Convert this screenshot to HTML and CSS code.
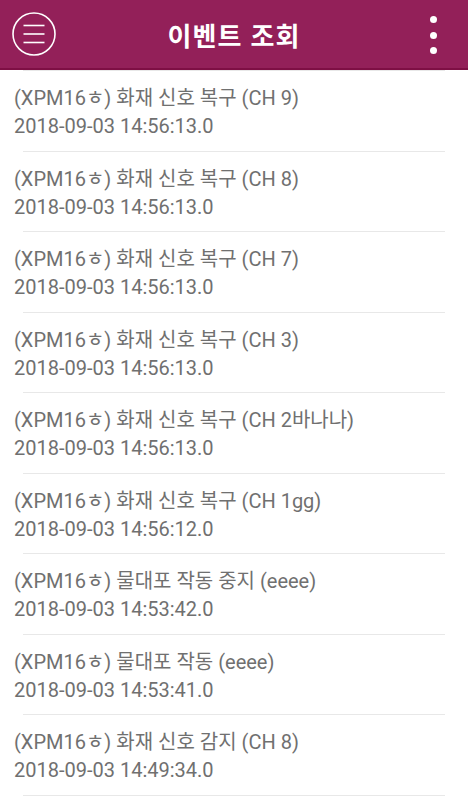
FILE: index.html
```html
<!DOCTYPE html>
<html lang="ko">
<head>
    <meta charset="UTF-8">
    <meta name="viewport" content="width=device-width, initial-scale=1.0">
    <title>이벤트 조회</title>
    <link rel="stylesheet" href="styles.css">
</head>

<body>
    <header class="navbar">
        <button class="menu-btn" aria-label="메뉴">
            <svg width="46" height="46" viewBox="0 0 46 46">
                <circle cx="23" cy="23" r="21" fill="none" stroke="#fff" stroke-width="1.6"/>
                <line x1="12.5" y1="14.5" x2="33.5" y2="14.5" stroke="#fff" stroke-width="1.6"/>
                <line x1="12.5" y1="23" x2="33.5" y2="23" stroke="#fff" stroke-width="1.6"/>
                <line x1="12.5" y1="31.5" x2="33.5" y2="31.5" stroke="#fff" stroke-width="1.6"/>
            </svg>
        </button>
        <h1>이벤트 조회</h1>
        <button class="more-btn" aria-label="더보기">
            <span></span><span></span><span></span>
        </button>
    </header>

    <ul class="event-list">
        <li class="event">
            <p>(XPM16ㅎ) 화재 신호 복구 (CH 9)</p>
            <p>2018-09-03 14:56:13.0</p>
        </li>
        <li class="event">
            <p>(XPM16ㅎ) 화재 신호 복구 (CH 8)</p>
            <p>2018-09-03 14:56:13.0</p>
        </li>
        <li class="event">
            <p>(XPM16ㅎ) 화재 신호 복구 (CH 7)</p>
            <p>2018-09-03 14:56:13.0</p>
        </li>
        <li class="event">
            <p>(XPM16ㅎ) 화재 신호 복구 (CH 3)</p>
            <p>2018-09-03 14:56:13.0</p>
        </li>
        <li class="event">
            <p>(XPM16ㅎ) 화재 신호 복구 (CH 2바나나)</p>
            <p>2018-09-03 14:56:13.0</p>
        </li>
        <li class="event">
            <p>(XPM16ㅎ) 화재 신호 복구 (CH 1gg)</p>
            <p>2018-09-03 14:56:12.0</p>
        </li>
        <li class="event">
            <p>(XPM16ㅎ) 물대포 작동 중지 (eeee)</p>
            <p>2018-09-03 14:53:42.0</p>
        </li>
        <li class="event">
            <p>(XPM16ㅎ) 물대포 작동 (eeee)</p>
            <p>2018-09-03 14:53:41.0</p>
        </li>
        <li class="event">
            <p>(XPM16ㅎ) 화재 신호 감지 (CH 8)</p>
            <p>2018-09-03 14:49:34.0</p>
        </li>
    </ul>
</body>
</html>
```

FILE: styles.css
```css
body {
    font-family: 'Roboto', 'Noto Sans CJK KR', sans-serif;
    margin: 0;
    padding: 0;
    background-color: #fff;
    color: #707070;
    overflow: hidden;
}

.navbar {
    height: 70px;
    box-sizing: border-box;
    background-color: #932059;
    border-bottom: 2px solid #7e0f44;
    display: grid;
    grid-template-columns: 1fr auto 1fr;
    align-items: center;
    padding: 0 31px 0 11px;
}

.navbar h1 {
    margin: 0 0 0 20px;
    color: #fff;
    font-family: 'Noto Sans CJK KR', sans-serif;
    font-size: 26px;
    font-weight: bold;
    letter-spacing: 1px;
}

.menu-btn {
    background: none;
    border: none;
    padding: 0;
    width: 46px;
    height: 46px;
}

.menu-btn svg {
    display: block;
}

.more-btn {
    justify-self: end;
    background: none;
    border: none;
    padding: 0;
    display: flex;
    flex-direction: column;
    gap: 8.5px;
    margin-top: 2px;
}

.more-btn span {
    display: block;
    width: 7px;
    height: 7px;
    border-radius: 50%;
    background: #fff;
}

.event-list {
    list-style: none;
    margin: 0;
    padding: 0;
}

.event {
    margin: 0 23px;
    padding: 13px 0 10.5px;
    border-top: 1px solid #e8e8e8;
}

.event:last-child {
    border-bottom: 1px solid #e8e8e8;
}

.event p {
    margin: 0 0 0 -9px;
    font-size: 20px;
    line-height: 28px;
    white-space: nowrap;
}
```
